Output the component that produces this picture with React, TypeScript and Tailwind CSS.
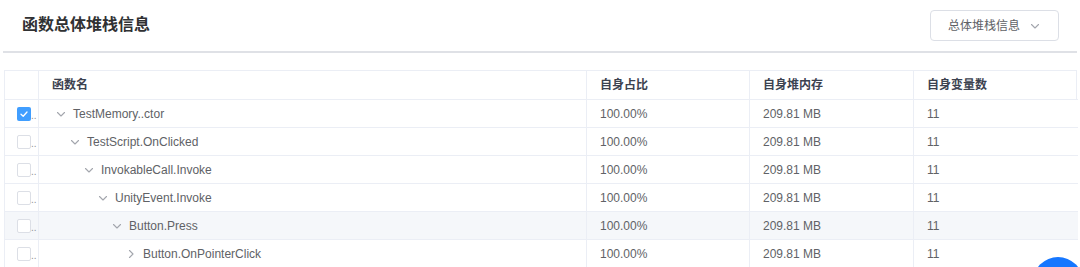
import { Fragment } from "react";

type Row = {
    name: string;
    level: number;
    expanded: boolean;
    checked?: boolean;
    hover?: boolean;
};

const rows: Row[] = [
    { name: "TestMemory..ctor", level: 0, expanded: true, checked: true },
    { name: "TestScript.OnClicked", level: 1, expanded: true },
    { name: "InvokableCall.Invoke", level: 2, expanded: true },
    { name: "UnityEvent.Invoke", level: 3, expanded: true },
    { name: "Button.Press", level: 4, expanded: true, hover: true },
    { name: "Button.OnPointerClick", level: 5, expanded: false },
];

const font = "font-['Liberation_Sans','Noto_Sans_CJK_SC',sans-serif]";

function Chevron({ open }: { open: boolean }) {
    return (
        <svg width="10" height="10" viewBox="0 0 10 10" fill="none" stroke="#a3a6ad" strokeWidth="1.1" strokeLinecap="round" strokeLinejoin="round">
            {open ? <path d="M1.5 3.5 L5 7 L8.5 3.5" /> : <path d="M3.5 1.5 L7 5 L3.5 8.5" />}
        </svg>
    );
}

function Checkbox({ checked }: { checked?: boolean }) {
    if (checked) {
        return (
            <span className="w-[14px] h-[14px] rounded-[2px] bg-[#409eff] flex items-center justify-center shrink-0">
                <svg width="10" height="10" viewBox="0 0 10 10" fill="none" stroke="#fff" strokeWidth="1.3" strokeLinecap="round" strokeLinejoin="round">
                    <path d="M2 5.2 L4.2 7.2 L8 3" />
                </svg>
            </span>
        );
    }
    return <span className="w-[14px] h-[14px] rounded-[2px] border border-[#dcdfe6] bg-white shrink-0" />;
}

export default function App() {
    return (
        <div className={`relative w-[1080px] h-[267px] overflow-hidden bg-white ${font}`}>
            {/* Header */}
            <div className="mx-[3px] h-[53px] flex items-center justify-between border-b-2 border-[#dfe1e6]">
                <h1 className="pl-[19px] pb-[1px] text-[16px] font-bold text-[#303133]">函数总体堆栈信息</h1>
                <button className="mr-[18px] w-[129px] h-[31px] rounded-[4px] border border-[#dcdfe6] bg-white flex items-center pl-[17px] gap-[10px] text-[12px] text-[#606266]">
                    <span>总体堆栈信息</span>
                    <Chevron open />
                </button>
            </div>

            {/* Table */}
            <div className="mt-[17px] ml-[4px] w-[1073px] border-l border-r border-t border-[#ebeef5] grid grid-cols-[34px_548px_163px_164px_164px] text-[12px]">
                <div className="h-[29px] border-b border-r border-[#ebeef5]" />
                <div className="h-[29px] border-b border-r border-[#ebeef5] flex items-center pl-[13px] font-bold text-[#3c4250]">函数名</div>
                <div className="h-[29px] border-b border-r border-[#ebeef5] flex items-center pl-[13px] font-bold text-[#3c4250]">自身占比</div>
                <div className="h-[29px] border-b border-r border-[#ebeef5] flex items-center pl-[13px] font-bold text-[#3c4250]">自身堆内存</div>
                <div className="h-[29px] border-b border-[#ebeef5] flex items-center pl-[13px] font-bold text-[#3c4250]">自身变量数</div>

                {rows.map((row) => {
                    const bg = row.hover ? "bg-[#f5f7fa]" : "bg-white";
                    return (
                        <Fragment key={row.name}>
                            <div className={`h-[28px] border-b border-r border-[#ebeef5] flex items-center pl-[12px] overflow-hidden ${bg}`}>
                                <Checkbox checked={row.checked} />
                                <span className="text-[#909399] leading-none pt-[5px] text-[10px]">..</span>
                            </div>
                            <div className={`h-[28px] border-b border-r border-[#ebeef5] flex items-center pl-[13px] text-[#606266] ${bg}`}>
                                <span style={{ width: row.level * 14 }} className="shrink-0" />
                                <span className="w-[17px] h-[16px] flex items-center justify-center shrink-0">
                                    <Chevron open={row.expanded} />
                                </span>
                                <span className="ml-[4px]">{row.name}</span>
                            </div>
                            <div className={`h-[28px] border-b border-r border-[#ebeef5] flex items-center pl-[13px] text-[#606266] ${bg}`}>100.00%</div>
                            <div className={`h-[28px] border-b border-r border-[#ebeef5] flex items-center pl-[13px] text-[#606266] ${bg}`}>209.81 MB</div>
                            <div className={`h-[28px] border-b border-[#ebeef5] flex items-center pl-[13px] text-[#606266] ${bg}`}>11</div>
                        </Fragment>
                    );
                })}
            </div>

            {/* Floating action button */}
            <div className="absolute left-[1033px] top-[257px] w-[50px] h-[50px] rounded-full bg-[#1677ff]" />
        </div>
    );
}
